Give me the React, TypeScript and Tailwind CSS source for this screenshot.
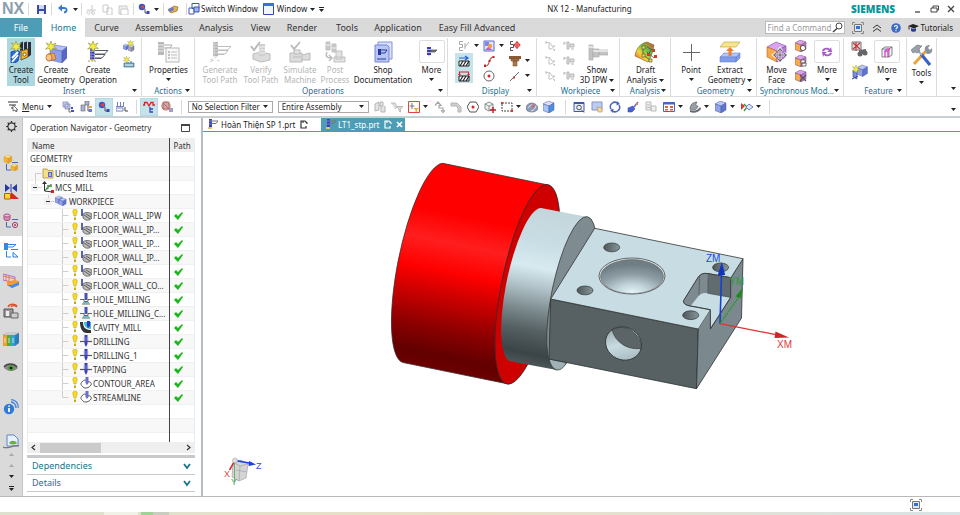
import React from "react";

type IconProps = { w?: number; h?: number; box?: string; className?: string; children: React.ReactNode };

function Icon({ w = 12, h = w, box, className = "", children }: IconProps) {
  return (
    <svg width={w} height={h} viewBox={box ?? `0 0 ${w} ${h}`} className={`shrink-0 ${className}`} fill="none" aria-hidden="true">
      {children}
    </svg>
  );
}

const Caret = ({ className = "" }: { className?: string }) => (
  <Icon w={5} h={3} className={className}>
    <path d="M0 0h5L2.500 3z" fill="#222" />
  </Icon>
);

/* ---------- shared glyph fragments ---------- */

const Star = ({ x, y, s = 1 }: { x: number; y: number; s?: number }) => (
  <g transform={`translate(${x} ${y}) scale(${s})`}>
    <path d="M0-5.500 1.300-1.800 5-3.500 2.600 0 5.500 2 1.800 1.800 0 5.500-1.500 1.800-5.500 2.600-2.400-.2-4.800-3.600-1.200-1.900z" fill="#f6ee3c" stroke="#8f8f3c" strokeWidth=".6" />
  </g>
);

const Cube = ({ x, y, s = 1, top = "#b9c8f8", front = "#8fa2ea", side = "#5f74cc", line = "#4a58a0" }: { x: number; y: number; s?: number; top?: string; front?: string; side?: string; line?: string }) => (
  <g transform={`translate(${x} ${y}) scale(${s})`} stroke={line} strokeWidth=".5">
    <path d="M0 3 5 0l6 2-5 3z" fill={top} />
    <path d="M0 3l6 2v7L0 9.500z" fill={front} />
    <path d="M6 5l5-3v7l-5 3z" fill={side} />
  </g>
);

const Mill = ({ x, y, s = 1, c = "#3a3fa8" }: { x: number; y: number; s?: number; c?: string }) => (
  <g transform={`translate(${x} ${y}) scale(${s})`}>
    <rect x="0" y="0" width="5" height="14" fill={c} />
    <path d="M0 2h5M0 5h5M0 8h5M0 11h5" stroke="#c3c6ee" strokeWidth=".8" />
    <path d="M1.200 0v14" stroke="#8d92dd" strokeWidth=".9" />
    <path d="M0 14h5l-2.500 3z" fill="#d8c84a" />
  </g>
);

const Steps = ({ x, y, s = 1, c = "#555b66" }: { x: number; y: number; s?: number; c?: string }) => (
  <g transform={`translate(${x} ${y}) scale(${s})`} stroke={c} strokeWidth="1">
    <path d="M0 .5h13L9.500 4H0M0 4.500h10L7 8H0M0 8.500h6" />
  </g>
);

/* ---------- ribbon icons (22 x 22) ---------- */

const Big = ({ children, dim }: { children: React.ReactNode; dim?: boolean }) => (
  <Icon w={22} h={22} className={dim ? "opacity-40 grayscale" : ""}>{children}</Icon>
);

const CreateToolIcon = () => (
  <Big>
    <path d="M10 2l3-1.500V9l-3 1zM14 1.500l3-1V8l-3 1zM18 1h3v13l-3 2z" fill="#2b2b3a" />
    <path d="M1 11l6-2 3 2-2 9-3 2H1z" fill="#2b6fd6" stroke="#173f8c" strokeWidth=".8" />
    <path d="M2 17l6-6M2 21l6-7" stroke="#fff" strokeWidth="1.800" />
    <path d="M11 10l7-2v8l-7 3z" fill="#f5b52e" stroke="#5c430a" strokeWidth=".8" />
    <circle cx="14.500" cy="13.500" r="1.600" fill="#fff" stroke="#5c430a" strokeWidth=".8" />
    <Star x={6} y={5.500} />
  </Big>
);
const CreateGeometryIcon = () => (
  <Big>
    <path d="M5 8l5-4 12 2-5 4z" fill="#b4c1f4" stroke="#5463b8" strokeWidth=".5" />
    <path d="M5 8l12 2v12L5 19z" fill="#8fa0ea" stroke="#5463b8" strokeWidth=".5" />
    <path d="M17 10l5-4v11l-5 5z" fill="#5568c4" stroke="#5463b8" strokeWidth=".5" />
    <path d="M3 13l6-1 2 6-7 2z" fill="#f7a55c" stroke="#a8591a" strokeWidth=".6" />
    <ellipse cx="4" cy="16.500" rx="3" ry="3.600" fill="#fbc48d" stroke="#a8591a" strokeWidth=".7" />
    <Star x={6} y={5.500} />
  </Big>
);
const CreateOperationIcon = () => (
  <Big>
    <Mill x={3} y={6} s={0.9} />
    <Steps x={8} y={9} />
    <path d="M1 20h2M7 20h2" stroke="#999" />
    <Star x={6} y={5.500} />
  </Big>
);
const PropertiesIcon = () => (
  <Big>
    <g opacity=".6">
      <rect x="0" y="1" width="6" height="13" fill="#8a8a8a" />
      <path d="M0 4h6M0 7h6M0 10h6" stroke="#ddd" />
      <path d="M6 4h8l-2 3H6" stroke="#777" />
      <rect x="8" y="7" width="13" height="14" fill="#f4f4f4" stroke="#8a8a8a" />
      <path d="M13 11h6M13 14h6M13 17h6" stroke="#999" />
      <path d="M10 10h2v2h-2zM10 13h2v2h-2zM10 16h2v2h-2z" fill="#999" />
    </g>
  </Big>
);
const GenerateIcon = () => (
  <Big dim>
    <Mill x={4} y={1} s={1} />
    <Steps x={9} y={5} />
    <path d="M1 19l3-1M1 21l4-2M11 20l-3-1" stroke="#888" />
  </Big>
);
const VerifyIcon = () => (
  <Big dim>
    <path d="M1 5l3 4 6-8" stroke="#555" strokeWidth="2" />
    <path d="M3 13l8-2 9 2v6l-9 2-8-3z" fill="#aaa" stroke="#555" />
    <path d="M9 3h6v12H9z" fill="#888" />
    <path d="M9 6h6M9 9h6M9 12h6" stroke="#ddd" />
  </Big>
);
const SimulateIcon = () => (
  <Big dim>
    <path d="M2 4l3 4 6-7" stroke="#555" strokeWidth="1.800" />
    <path d="M1 12h12v9H1zM13 14l8-2v7h-8" stroke="#555" fill="#aaa" />
    <path d="M5 9h6v4H5zM4 16h8" stroke="#555" fill="#bbb" />
  </Big>
);
const PostIcon = () => (
  <Big dim>
    <path d="M2 1h4v8H2zM8 3h4v8H8z" fill="#777" stroke="#666" />
    <path d="M2 4h4M8 7h4" stroke="#ddd" />
    <path d="M3 11c-2 4 0 6 4 6M5 14l3 3-3 3" stroke="#555" strokeWidth="1.400" />
    <path d="M12 10h6v8h-6zM10 16h11v5H10z" stroke="#666" fill="#bbb" />
  </Big>
);
const ShopDocIcon = () => (
  <Big>
    <path d="M6 1h14v17H6z" fill="#dbe3fb" stroke="#8394d8" />
    <path d="M3 4h12l2 2v15H3z" fill="#b7c6f6" stroke="#7486d2" />
    <path d="M6 8h3v6H6z" fill="#28389a" />
    <path d="M9 9h6l-2 3H9M5 18h9" stroke="#28389a" />
  </Big>
);
const Show3DIcon = () => (
  <Big>
    <path d="M3 4h4v15H3zM7 8h6v8H7zM13 9h9v5h-9z" fill="#c3c3c3" stroke="#b0b0b0" strokeWidth=".7" />
    <path d="M3 6h4M7 10h15" stroke="#efefef" strokeWidth="1.500" />
  </Big>
);
const DraftIcon = () => (
  <Icon w={24} h={22}>
    <defs>
      <linearGradient id="draft" x1="0" y1="1" x2="1" y2="0">
        <stop offset="0" stopColor="#e8362c" />
        <stop offset=".35" stopColor="#f3d33a" />
        <stop offset=".6" stopColor="#67c04a" />
        <stop offset="1" stopColor="#e8462c" />
      </linearGradient>
    </defs>
    <path d="M1 15C2 7 7 2 13 1l7 3c-1 5-2 11-6 17z" fill="url(#draft)" stroke="#8c5a2a" strokeWidth=".6" />
    <path d="M9 6v8l7 5M13 6l7 4M13 11l7 6M14 14l3-5" stroke="#444" strokeWidth=".7" />
    <path d="M8 5h3v3H8zM8 13h3v3H8zM15 18h3v3h-3z" fill="#f3e13a" stroke="#444" strokeWidth=".6" />
    <path d="M18 8h3v3h-3zM20 14h3v3h-3zM13 12h3v3h-3z" fill="#e0342a" />
  </Icon>
);
const PointIcon = () => (
  <Big>
    <path d="M11.500 3v17M3 11.500h17" stroke="#666" />
  </Big>
);
const ExtractIcon = () => (
  <Big>
    <path d="M5 1h16l-4 5H1z" fill="#f6e58a" stroke="#b99b3a" strokeWidth=".6" />
    <path d="M1 16l4-4h16l-4 4z" fill="#b3c6f7" stroke="#6b82cc" strokeWidth=".6" />
    <path d="M1 16h16v5H1zM17 16l4-4v5l-4 4z" fill="#7f9bea" stroke="#6b82cc" strokeWidth=".6" />
    <path d="M11 6l4 4h-2.500v5h-3v-5H7z" fill="#f08028" />
  </Big>
);
const MoveFaceIcon = () => (
  <Big>
    <path d="M1 6l9-5 10 4-9 5z" fill="#d9a3ee" stroke="#7a4a96" strokeWidth=".6" />
    <path d="M1 6l10 4v11L1 16z" fill="#f8a94e" stroke="#a8682a" strokeWidth=".6" />
    <path d="M11 10l9-5v11l-9 5z" fill="#b678d6" stroke="#7a4a96" strokeWidth=".6" />
    <path d="M14 8v12M8 14h12M12 10l2-2.500 2 2.500M12 18l2 2.500 2-2.500M10 12l-2.500 2 2.500 2M18 12l2.500 2-2.500 2" stroke="#fff" strokeWidth="2.600" />
    <path d="M14 8v12M8 14h12M12 10l2-2.500 2 2.500M12 18l2 2.500 2-2.500M10 12l-2.500 2 2.500 2M18 12l2.500 2-2.500 2" stroke="#444" strokeWidth=".9" />
  </Big>
);
const ToolsIcon = () => (
  <Big>
    <path d="M3 20L16 6" stroke="#e8a63a" strokeWidth="3" />
    <path d="M14 7c-1-4 1-6 5-6l-2 3 2 2 2-2c1 4-1 6-5 6z" fill="#8a949c" />
    <path d="M10 10l9 11" stroke="#3a62c4" strokeWidth="3.200" />
    <path d="M6 6l5 5" stroke="#aab2ba" strokeWidth="2" />
    <path d="M0 6l6-5 5 1-3 3 1 2-3 2-2-1-2 1z" fill="#9aa2a9" stroke="#59616a" strokeWidth=".5" />
  </Big>
);

const SmallMill = () => (
  <Icon w={14} h={12}>
    <path d="M2 1h4v8H2z" fill="#3a3fa8" />
    <path d="M2 3.500h4M2 6.500h4" stroke="#b9bdee" />
    <path d="M3 9h2l-1 2z" fill="#d8c84a" />
    <path d="M6 4h6l-2 2H6z" fill="#777" stroke="#555" strokeWidth=".8" />
  </Icon>
);
const Swirl = () => (
  <Icon w={12}>
    <path d="M1 5c1-4 6-4 8-2l1-2 1 5H6l2-1.500C6 3 4 3 3 5.500zM11 7c-1 4-6 4-8 2l-1 2-1-5h5L4 7.500C6 9 8 9 9 6.500z" fill="#a45bc4" />
  </Icon>
);
const PinkBox = () => (
  <Icon w={12}>
    <path d="M1 3l3-2h7v8l-3 2H1zM1 3h7v8M8 3l3-2" fill="#f5f5f5" stroke="#666" strokeWidth=".8" />
    <path d="M4 11V5h3v6" stroke="#d93ad0" strokeWidth="1.300" />
    <path d="M4 5l2-2h3L7 5" stroke="#d93ad0" />
  </Icon>
);

/* ---------- small icons (12 x 12) ---------- */

const small: Record<string, React.ReactNode> = {
  blocks: <><Cube x={0} y={4} s={0.5} /><Cube x={5} y={5} s={0.55} top="#ddd" front="#aab" side="#889" /><Star x={7.500} y={3.500} s={0.6} /></>,
  table: <><path d="M1 7h10v4H1z" fill="#7fb0c8" stroke="#3d6f86" strokeWidth=".7" /><path d="M2 9h8" stroke="#fff" strokeWidth=".8" /><path d="M8 5v2M5 6v1" stroke="#3d6f86" /><Star x={3.500} y={3.500} s={0.6} /></>,
  spring: <path d="M5 1.500H1.500v3h3v3h-3v3H5M7 7l4-5M7 3v6" stroke="#aaa" />,
  picture: <><path d="M1 1h10v10H1z" fill="#e4e8fc" stroke="#5a66d0" /><path d="M2 2h4v4H2z" fill="#7b88ea" /><circle cx="7" cy="6" r="2.200" fill="#f0a03c" /><path d="M2 10l3-3 5 3z" fill="#d25ab0" /></>,
  springRed: <><path d="M4 1.500H1.500v3h3v3h-3v3H4" stroke="#555" /><circle cx="8" cy="5" r="2.400" stroke="#d22" /><path d="M8 1v8M4.500 5h7" stroke="#d22" /></>,
  hatchTop: <><path d="M1 6h10v5H1z" fill="#fff" stroke="#222" /><path d="M2 11l3-5M5 11l3-5M8 11l3-5" stroke="#222" strokeWidth="1.200" /><path d="M1 3h8M7 1l3 2-3 2" stroke="#2463d6" strokeWidth="1.200" /></>,
  hatchRed: <><path d="M1 6h10v5H1z" fill="#fff" stroke="#222" /><path d="M2 11l3-5M5 11l3-5M8 11l3-5" stroke="#222" strokeWidth="1.200" /><path d="M1.500 6V2h9v4" stroke="#d22" strokeWidth="1.100" /><path d="M0 4h3L1.500 6zM9 4h3l-1.500 2z" fill="#d22" /></>,
  sCurve: <><path d="M2 11c6 1 2-9 9-9" stroke="#a55" strokeWidth="1.100" /><path d="M1 9.500h2V12H1zM9.500 1h2v2h-2zM5.500 5h2v2h-2z" fill="#c22" /></>,
  cutter: <><path d="M0 1h12v3H0z" fill="#8a5a34" /><path d="M2 4h8v2H2zM4 6h4v5H4z" fill="#b07a4a" stroke="#6b4426" strokeWidth=".5" /></>,
  target: <><circle cx="6" cy="6" r="5" stroke="#666" /><circle cx="6" cy="6" r="1.500" fill="#d22" /></>,
  line: <><path d="M1 11L10 2" stroke="#666" /><path d="M4 6.500h2v2H4z" fill="#c33" /></>,
  ghost: <><path d="M1 1v3M1 2.500h2M4 2v7h2l4-3H7l-2-3z" stroke="#bbb" strokeWidth=".9" /><path d="M8 9l2 1-1 1" stroke="#bbb" /></>,
  ghost2: <path d="M1 2v3M1 3h2M4 2v7h2V2zM7 4h4v3H7zM8 9h3" stroke="#b8b8b8" strokeWidth="1" fill="#ddd" />,
  syncA: <><Cube x={0} y={0} top="#d9a3ee" front="#f8a94e" side="#b678d6" line="#7a4a66" /><circle cx="8" cy="8" r="2.600" fill="#fff" stroke="#555" /></>,
  syncB: <><Cube x={0} y={0} top="#d9a3ee" front="#f8a94e" side="#b678d6" line="#7a4a66" /><path d="M6 5h4v3H6zM7 8h4v3H7z" fill="#fff" stroke="#555" strokeWidth=".8" /></>,
  syncC: <><Cube x={0} y={0} top="#d9a3ee" front="#f8a94e" side="#b678d6" line="#7a4a66" /><path d="M5 5l6 6M11 5l-6 6" stroke="#555" strokeWidth="1.100" /></>,
  nav1: <><path d="M1 1h5v5H1zM3 3h5v5H3z" fill="#ccd2f0" stroke="#7a80b0" strokeWidth=".7" /><path d="M7 7v4h2" stroke="#555" strokeWidth=".8" /><path d="M9 6h2v2H9zM9 9h3v2H9z" fill="#4450c0" /></>,
  nav2: <><path d="M5 0h4v4H5zM1 4h4v6H1z" fill="#a9afe2" stroke="#666" strokeWidth=".6" /><path d="M8 4v6h2" stroke="#555" /><path d="M9 5h3v2H9z" fill="#e8a24c" /><path d="M9 8h3v3H9z" fill="#6f78c8" /></>,
  nav3: <><circle cx="4" cy="4" r="3.200" fill="#3a56c8" /><path d="M2 4l4-2v4z" fill="#e0463a" /><path d="M7 6v4h2" stroke="#333" strokeWidth=".8" /><path d="M8.500 8h3v3h-3z" fill="#3544b8" /></>,
  nav4: <><path d="M0 5.500h8M1.500 1v4M4.500 1v4M7.500 1v4M0 7h7v3H0z" stroke="#7480c4" /><path d="M9 6v4h3" stroke="#444" /></>,
  path: <><path d="M0 4h1.500V1.500H4L6 5l2-3.500h2V4H12" stroke="#d22" strokeWidth="1.300" /><path d="M7 6v5h3M7 8h3" stroke="#3948b8" strokeWidth="1.300" /></>,
  noTool: <><path d="M2 1h6v7H2z" fill="#c9a9a9" stroke="#855" strokeWidth=".6" /><path d="M8 7h4v4H8z" fill="#9aa2c8" /><circle cx="5" cy="5" r="4" stroke="#cc7070" strokeWidth="1.200" /><path d="M2 2l6 6" stroke="#c66" /></>,
  grab: <path d="M1 3l4-2v8l-4 1zM6 1h3v4H6zM7 5v6h4V5" fill="#e4e4e4" stroke="#b4b4b4" />,
  funnel: <path d="M0 2h4l2 4-2 2M6 5.500h6L9.500 8v3L8 10V8z" stroke="#bbb" fill="#ddd" />,
  snap: <><path d="M.5.5h11v11H.5z" stroke="#d44" /><path d="M4 2v6M1.500 5h5" stroke="#777" /><path d="M5 7h6L9 9v2H7.500V9z" fill="#e5b53a" /></>,
  flip: <path d="M2 4.500L5 1l3 3.500H6V7h4v3M8 9l2 2.500L12 9" stroke="#a5a5a5" strokeWidth="1.200" />,
  arm: <path d="M1 2h6l4 4v5H8V7L6 5H1z" fill="#cfcfcf" stroke="#b4b4b4" />,
  hex: <><path d="M3 1h6l3 5-3 5H3L0 6z" stroke="#555" /><circle cx="6" cy="6" r="1.500" fill="#d22" /></>,
  cubeRed: <><path d="M1 3l4-2 4 2v5L5 10 1 8zM1 3l4 2 4-2M5 5v5" stroke="#777" strokeWidth=".8" fill="#eee" /><path d="M9 6v6M6 9h6" stroke="#b22" strokeWidth="1.500" /></>,
  marquee: <><path d="M1 2h10v8H1z" stroke="#444" strokeDasharray="2 1" /><path d="M0 1h2v2H0zM10 9h2v2h-2z" fill="#d33" /></>,
  sphere: <><path d="M0 7c0-3 3-5 6-5s6 3 6 5-3 4-6 4-6-1-6-4z" fill="#8d9ab8" stroke="#666" strokeWidth=".6" /><path d="M2 7c1-2 3-3 5-3M5 10c3 0 4-3 5-5" stroke="#e8ecf8" /><circle cx="7" cy="5" r="1.500" fill="#c66" /></>,
  cubeBlue: <Cube x={0} y={0} top="#e4dcf4" front="#a9c4f6" side="#4a8fe0" />,
  zoomFit: <><path d="M1 1.500h10v9H1z" fill="#e6eefc" stroke="#4458a8" /><path d="M1 2h10" stroke="#4458a8" strokeWidth="2" /><circle cx="6" cy="6.500" r="2.300" stroke="#555" /><path d="M8 8.500l3 3" stroke="#555" /></>,
  viewCard: <><path d="M1 1h10v8H1z" fill="#bccbf0" stroke="#8295c8" /><path d="M6 6l5 1v4H7z" fill="#f0d8a0" stroke="#b09050" strokeWidth=".6" /></>,
  rotate: <><path d="M2 8a4.500 4.500 0 0 1 7-5.500M10 4a4.500 4.500 0 0 1-7 5.500" stroke="#4a62c0" strokeWidth="1.500" /><path d="M8 0l3 3-3.500 1.500zM4 12L1 9l3.500-1.500z" fill="#4a62c0" /></>,
  brush: <><path d="M1 7l5-2 2 3-3 3H1z" fill="#4a62d8" stroke="#2e3f90" strokeWidth=".5" /><path d="M7 6l4-5" stroke="#6a70c0" strokeWidth="1.600" /><path d="M9 2h2v2H9z" fill="#e07a6a" /></>,
  sheets: <path d="M1 1h5v8H1zM6 5h5v5H6zM2 4h3M2 6.500h3" stroke="#bbb" fill="#eee" />,
  grid: <><path d="M.5 1.500h11v9H.5z" fill="#fff" stroke="#4467c8" /><path d="M0 2.500h12" stroke="#4467c8" strokeWidth="2" /><path d="M2 5h3v2H2zM7 5h3v2H7zM2 8h3v1.500H2zM7 8h3v1.500H7z" fill="#e0603a" /></>,
  dome: <><path d="M1 8c0-4 3-7 7-7-2 3-1 4 1 4-1 4-5 5-8 3z" fill="#9a9fa6" stroke="#5a5f66" strokeWidth=".7" /><path d="M1 9c4 2 8 0 10-3l1 2c-2 3-7 5-11 3z" fill="#666b72" /></>,
  cubeShade: <Cube x={0} y={0} />,
  rgb: <><path d="M0 2l4 3-4 4z" fill="#d33" /><path d="M3 3l3 3-3 4" stroke="#3a9a3a" strokeWidth="1.300" /><path d="M5 6l3-3 4 3-4 3z" fill="#dfe6f8" stroke="#6a84c8" /></>,
};

const Small = ({ n, className = "" }: { n: string; className?: string }) => <Icon w={12} className={className}>{small[n]}</Icon>;

/* ---------- title bar ---------- */

const Rule = ({ className = "" }: { className?: string }) => <span className={`w-px shrink-0 bg-[#d9d9d9] ${className}`} />;

function TitleBar() {
  return (
    <header className="flex h-[18px] items-center bg-white text-[8px]">
      <div className="flex flex-[5] items-center">
        <span className="w-[28px] pl-[2px] font-['Liberation_Sans'] text-[16px] leading-[18px] font-bold text-[#8ba0ac]">NX</span>
        <Rule className="h-3" />
        <button aria-label="Save" className="ml-[7px]"><Icon w={11}><path d="M1 1h9v9H1z" fill="#3a4aa8" /><path d="M3 1h5v4H3z" fill="#cfd6f6" /><path d="M3 7h5v3H3z" fill="#e8e8f0" /></Icon></button>
        <Rule className="ml-1 h-3" />
        <button aria-label="Undo" className="ml-[6px] flex items-center gap-[5px]"><Icon w={10}><path d="M2 4h4c4 0 3 4 0 4.500" stroke="#3478d8" strokeWidth="1.800" /><path d="M0 4l4-3.500v7z" fill="#3478d8" /></Icon><Caret /></button>
        <Rule className="ml-[3px] h-3" />
        <div className="ml-[4px] flex gap-[5px] opacity-30 grayscale">
          <button aria-label="Cut"><Icon w={11}><path d="M1 6h9M6 1v7" stroke="#555" /><circle cx="2.500" cy="8.500" r="1.500" stroke="#555" /><circle cx="7" cy="9" r="1.500" stroke="#555" /></Icon></button>
          <button aria-label="Copy"><Icon w={11}><path d="M1 1h5v7H1zM5 4h5v7H5z" fill="#fff" stroke="#555" /></Icon></button>
          <button aria-label="Paste"><Icon w={11}><path d="M1 2h8v8H1z" fill="#ccc" stroke="#555" /><path d="M3 5h7v6H3z" fill="#fff" stroke="#555" /></Icon></button>
        </div>
        <Rule className="ml-1 h-3" />
        <button aria-label="Assembly load" className="ml-[4px] flex items-center gap-1"><Small n="nav3" /><Caret /></button>
        <Rule className="ml-1 h-3" />
        <button aria-label="Touch mode" className="ml-[3px]"><Icon w={12}><path d="M1 7l6-4 4 1-1 4-6 2z" fill="#e9b04a" stroke="#7b5a1c" strokeWidth=".6" /><path d="M1 6l5-2 1 3-4 2z" fill="#6f78c8" /></Icon></button>
        <Rule className="ml-[7px] h-3" />
        <button className="ml-px flex items-center gap-px whitespace-nowrap text-[#222]">
          <Icon w={12}><path d="M4 .5h7v5H4zM1 5h5v6H1z" fill="#fff" stroke="#3a56c0" /><path d="M6 4h5v5H6z" fill="#9db2f0" stroke="#3a56c0" /></Icon>
          Switch Window
        </button>
        <button className="ml-[5px] flex items-center gap-[3px] text-[#222]">
          <Icon w={11} h={12}><path d="M.5.5h10v11H.5z" fill="#f2f5ff" stroke="#2e49b8" /><path d="M0 1.500h11" stroke="#3b6fe0" strokeWidth="3" /></Icon>
          Window <Caret />
        </button>
        <button aria-label="Customize" className="ml-1"><Icon w={5} h={5}><path d="M0 .5h5" stroke="#222" /><path d="M0 2h5L2.500 5z" fill="#222" /></Icon></button>
      </div>
      <h1 className="text-[8px] whitespace-nowrap text-[#222]">NX 12 - Manufacturing</h1>
      <div className="flex flex-[3] items-center justify-end">
        <span className="font-['Open_Sans'] text-[10px] leading-[18px] font-extrabold text-[#009999]">SIEMENS</span>
        <button aria-label="Minimize" className="ml-[19px]"><Icon w={7} h={8}><path d="M1 7h5" stroke="#444" strokeWidth="1.300" /></Icon></button>
        <button aria-label="Restore" className="ml-[9px]"><Icon w={9}><path d="M3 3V1h5.500v4H7M1 3h6v4H1z" stroke="#444" /></Icon></button>
        <button aria-label="Close" className="mr-[5px] ml-[8px]"><Icon w={8}><path d="M1 1l6 6M7 1L1 7" stroke="#444" strokeWidth="1.300" /></Icon></button>
      </div>
    </header>
  );
}

/* ---------- tab row ---------- */

const tabs = [
  ["File", "w-[42px] bg-[#4e9db6] text-white"],
  ["Home", "w-[43px] bg-white text-[#1b7390]"],
  ["Curve", "w-[43px]"],
  ["Assemblies", "w-[62px]"],
  ["Analysis", "w-[52px]"],
  ["View", "w-[37px]"],
  ["Render", "w-[46px]"],
  ["Tools", "w-[44px]"],
  ["Application", "w-[58px]"],
  ["Easy Fill Advanced", "w-[100px]"],
];

function TabRow() {
  return (
    <nav className="flex h-[19px] bg-[#dadada] text-[9px] text-[#333]">
      {tabs.map(([name, cls]) => (
        <button key={name} className={`shrink-0 whitespace-nowrap ${cls}`}>{name}</button>
      ))}
      <div className="ml-auto flex items-center pr-[7px] text-[8px]">
        <label className="flex h-[13px] w-20 items-center border border-[#bbb] bg-white">
          <input aria-label="Find a Command" placeholder="Find a Command" className="w-[66px] pl-[2px] text-[8px] outline-none placeholder:text-[#999]" />
          <Icon w={11}><circle cx="7" cy="4" r="3" stroke="#444" /><path d="M5 6.500L1 10" stroke="#444" strokeWidth="1.500" /></Icon>
        </label>
        <button aria-label="Full screen" className="ml-[7px]"><FullScreenIcon /></button>
        <button aria-label="Minimize ribbon" className="ml-2"><Icon w={10}><path d="M1 5l4-3 4 3M1 8.500l4-3 4 3" stroke="#333" /></Icon></button>
        <button aria-label="Help" className="ml-[9px]">
          <Icon w={10}><circle cx="5" cy="5" r="4.800" fill="#3a6cc8" /><path d="M3.500 4c0-2 3-2 3 0 0 1-1.500 1-1.500 2.200M5 7v1.200" stroke="#fff" strokeWidth="1.100" /></Icon>
        </button>
        <button className="ml-[7px] flex items-center gap-[2px] text-[#222]">
          <Icon w={11} h={9}><path d="M0 3l5-2 6 2-5 2.500z" fill="#222" /><path d="M3 5v3c1 1 4 1 5 0V5L6 6z" fill="#2b3f90" /><path d="M1 3.500v3" stroke="#222" /></Icon>
          Tutorials
        </button>
      </div>
    </nav>
  );
}

function FullScreenIcon() {
  return (
    <Icon w={12}>
      <path d="M.5 3V.5H3M9 .5h2.500V3M11.500 9v2.500H9M3 11.500H.5V9" stroke="#888" />
      <path d="M2.500 2.500h7v7h-7z" fill="#dfe8f5" stroke="#777" />
      <path d="M4 4h4v3H4z" fill="#2f72d8" />
    </Icon>
  );
}

/* ---------- ribbon ---------- */

type BigButtonProps = { icon: React.ReactNode; lines: string[]; arrow?: "below" | "inline"; width: string; dim?: boolean; active?: boolean; boxed?: boolean };

function BigButton({ icon, lines, arrow, width, dim, active, boxed }: BigButtonProps) {
  return (
    <button
      disabled={dim}
      className={`flex h-[48px] shrink-0 flex-col items-center pt-[2px] leading-[10px] whitespace-nowrap ${width} ${active ? "bg-[#aed8e0]" : ""} ${dim ? "text-[#b5b5b5]" : "text-[#222]"}`}
    >
      <span className={`mb-[2px] flex h-[23px] shrink-0 items-center justify-center ${boxed ? "w-[26px] rounded-xs border border-[#dedede]" : ""}`}>{icon}</span>
      {lines.map((line, i) => (
        <span key={line} className="flex items-center gap-[2px]">
          {line}
          {arrow === "inline" && i === lines.length - 1 && <Caret />}
        </span>
      ))}
      {arrow === "below" && <Caret className="mt-[3px]" />}
    </button>
  );
}

function Group({ label, width, children }: { label: string; width: string; children: React.ReactNode }) {
  return (
    <section aria-label={label} className={`flex shrink-0 flex-col border-r border-[#dcdcdc] ${width}`}>
      <div className="flex h-[48px]">{children}</div>
      <div className="flex h-[10px] items-center">
        <span className="w-[9px]" />
        <span className="flex-1 text-center whitespace-nowrap text-[#1b7390]">{label}</span>
        <button aria-label={`${label} options`} className="flex h-[7px] w-[9px] shrink-0 items-start pt-px"><Caret /></button>
      </div>
    </section>
  );
}

const SmallButton = ({ n, name, arrow, active }: { n: string; name: string; arrow?: boolean; active?: boolean }) => (
  <button aria-label={name} className="flex h-[15px] items-center gap-px">
    <span className={`flex h-[15px] items-center px-[3px] ${active ? "bg-[#c5e3ea]" : ""}`}><Small n={n} /></span>
    {arrow && <Caret />}
  </button>
);

function Ribbon() {
  return (
    <div className="flex h-[60px] overflow-hidden border-b border-[#dcdcdc] bg-white pt-[1px] text-[8px]">
      <Group label="Insert" width="w-[142px] pl-[7px]">
        <BigButton width="w-[28px]" icon={<CreateToolIcon />} lines={["Create", "Tool"]} active />
        <BigButton width="w-[42px]" icon={<CreateGeometryIcon />} lines={["Create", "Geometry"]} />
        <BigButton width="w-[42px]" icon={<CreateOperationIcon />} lines={["Create", "Operation"]} />
        <div className="ml-px flex flex-col gap-px">
          <SmallButton n="blocks" name="Create Method" />
          <SmallButton n="table" name="Create Program" />
        </div>
      </Group>
      <Group label="Actions" width="w-[53px]">
        <BigButton width="w-[53px]" icon={<PropertiesIcon />} lines={["Properties"]} arrow="below" />
      </Group>
      <Group label="Operations" width="w-[253px] pl-[4px]">
        <BigButton width="w-[42px]" icon={<GenerateIcon />} lines={["Generate", "Tool Path"]} dim />
        <BigButton width="w-[40px]" icon={<VerifyIcon />} lines={["Verify", "Tool Path"]} dim />
        <BigButton width="w-[38px]" icon={<SimulateIcon />} lines={["Simulate", "Machine"]} dim />
        <BigButton width="w-[32px]" icon={<PostIcon />} lines={["Post", "Process"]} dim />
        <BigButton width="w-[64px]" icon={<ShopDocIcon />} lines={["Shop", "Documentation"]} />
        <BigButton width="w-[33px]" icon={<SmallMill />} lines={["More"]} arrow="below" boxed />
      </Group>
      <Group label="Display" width="w-[89px] pl-[7px]">
        <div className="flex flex-col">
          <SmallButton n="spring" name="Tool display" arrow />
          <SmallButton n="hatchTop" name="Show tool path" active />
          <SmallButton n="hatchRed" name="Show boundary" active />
        </div>
        <div className="ml-px flex flex-col">
          <SmallButton n="picture" name="Shading" arrow />
          <SmallButton n="sCurve" name="Curve display" />
          <SmallButton n="target" name="Show point" />
        </div>
        <div className="ml-[2px] flex flex-col">
          <SmallButton n="springRed" name="Replay" />
          <SmallButton n="cutter" name="Cutter" arrow />
          <SmallButton n="line" name="Line" arrow />
        </div>
      </Group>
      <Group label="Workpiece" width="w-[83px] pl-[5px]">
        <div className="flex flex-col">
          <SmallButton n="ghost" name="Show 2D" />
          <SmallButton n="ghost" name="Show blank" />
          <SmallButton n="ghost" name="Show part" />
        </div>
        <div className="flex flex-col">
          <SmallButton n="ghost2" name="Save 2D" />
          <SmallButton n="ghost2" name="Save blank" />
          <SmallButton n="ghost2" name="Save part" />
        </div>
        <BigButton width="w-[38px]" icon={<Show3DIcon />} lines={["Show", "3D IPW"]} arrow="inline" />
      </Group>
      <Group label="Analysis" width="w-[51px]">
        <BigButton width="w-[51px]" icon={<DraftIcon />} lines={["Draft", "Analysis"]} arrow="inline" />
      </Group>
      <Group label="Geometry" width="w-[86px] pl-[4px]">
        <BigButton width="w-[32px]" icon={<PointIcon />} lines={["Point"]} arrow="below" />
        <BigButton width="w-[46px]" icon={<ExtractIcon />} lines={["Extract", "Geometry"]} arrow="inline" />
      </Group>
      <Group label="Synchronous Mod..." width="w-[87px]">
        <BigButton width="ml-[4px] w-[31px]" icon={<MoveFaceIcon />} lines={["Move", "Face"]} />
        <div className="flex flex-col">
          <SmallButton n="syncA" name="Pull face" />
          <SmallButton n="syncB" name="Offset region" />
          <SmallButton n="syncC" name="Delete face" />
        </div>
        <BigButton width="w-[34px]" icon={<Swirl />} lines={["More"]} arrow="below" boxed />
      </Group>
      <Group label="Feature" width="w-[63px] pl-[7px]">
        <div className="flex flex-col gap-[6px] pt-[3px]">
          <button aria-label="Edit feature">
            <Icon w={17}><path d="M1 1h9v8H1z" fill="#ddd" stroke="#777" /><path d="M2 2l7 6M9 2L2 8M5 1v9" stroke="#c33" strokeWidth="1.200" /><path d="M8 9l7-1v4l-7 2z" fill="#667" /><circle cx="9" cy="13" r="2.500" fill="#666" /><circle cx="14" cy="12" r="2.500" fill="#666" /></Icon>
          </button>
          <button aria-label="Create feature">
            <Icon w={17}><Cube x={6} y={1} s={0.95} /><path d="M2 7l4 2v6l-4-2z" fill="#7e8ee6" stroke="#34428c" strokeWidth=".6" /><path d="M1 15l6-3" stroke="#34428c" /><Star x={5} y={5} s={0.7} /></Icon>
          </button>
        </div>
        <BigButton width="w-[38px]" icon={<PinkBox />} lines={["More"]} arrow="below" boxed />
      </Group>
      <div className="flex w-[30px] shrink-0 flex-col border-r border-[#dcdcdc] pt-[3px]">
        <BigButton width="w-[29px]" icon={<ToolsIcon />} lines={["Tools"]} arrow="below" />
      </div>
      <div className="flex flex-1 items-end justify-end pr-[4px] pb-[6px]"><Caret /></div>
    </div>
  );
}

/* ---------- selection toolbar ---------- */

const Tool = ({ n, arrow, active }: { n: string; arrow?: boolean; active?: boolean }) => (
  <button aria-label={n} className={`flex h-4 shrink-0 items-center gap-[3px] px-[2px] ${active ? "bg-[#c5e3ea] outline outline-[#b5dae2]" : ""}`}>
    <Small n={n} />
    {arrow && <Caret />}
  </button>
);

function Picker({ label, value, width }: { label: string; value: string; width: string }) {
  return (
    <label className={`relative flex h-3 shrink-0 items-center border border-[#aaa] bg-white ${width}`}>
      <select aria-label={label} className="h-[10px] w-full appearance-none pl-[3px] leading-[10px] text-[#222] outline-none">
        <option>{value}</option>
      </select>
      <Icon w={5} h={3} className="pointer-events-none absolute right-[4px]"><path d="M0 0h5L2.500 3z" fill="#222" /></Icon>
    </label>
  );
}

function SelectionBar() {
  return (
    <div className="flex h-[21px] items-center border-b-2 border-[#c9d0d4] bg-white pr-[4px] text-[8px] text-[#222]">
      <button className="ml-[8px] flex items-center gap-[3px]">
        <Icon w={11}><path d="M0 1h10M1 4h7M3 7h4" stroke="#777" strokeWidth="1.300" /><path d="M5 4l5 5-2 0 1 2-1 0-1-2-2 1z" fill="#fff" stroke="#444" strokeWidth=".7" /></Icon>
        <span><u>M</u>enu</span><Caret />
      </button>
      <div className="ml-[8px] flex gap-[2px]">
        <Tool n="nav1" /><Tool n="nav2" /><Tool n="nav3" active /><Tool n="nav4" />
      </div>
      <Rule className="mr-[4px] ml-[6px] h-[14px]" />
      <div className="flex gap-[2px]"><Tool n="path" active /><Tool n="noTool" /></div>
      <Rule className="mx-[6px] h-[14px]" />
      <Picker label="Selection filter" value="No Selection Filter" width="w-[85px]" />
      <Picker label="Selection scope" value="Entire Assembly" width="ml-[5px] w-[91px]" />
      <div className="ml-[3px] flex gap-px">
        <Tool n="grab" /><Tool n="funnel" /><Tool n="snap" arrow /><Tool n="flip" /><Tool n="arm" /><Tool n="hex" /><Tool n="cubeRed" /><Tool n="marquee" arrow /><Tool n="sphere" /><Tool n="cubeBlue" />
      </div>
      <Rule className="mr-[5px] ml-[8px] h-[14px]" />
      <div className="flex gap-[2px]">
        <Tool n="zoomFit" /><Tool n="viewCard" /><Tool n="rotate" /><Tool n="brush" /><Tool n="sheets" /><Tool n="grid" arrow /><Tool n="dome" arrow /><Tool n="cubeShade" arrow /><Tool n="rgb" arrow />
      </div>
      <Rule className="ml-[6px] h-[14px]" />
      <Caret className="mt-[6px] ml-auto" />
    </div>
  );
}

/* ---------- resource bar ---------- */

const resourceIcons: { name: string; art: React.ReactNode; active?: boolean }[] = [
  { name: "Assembly Navigator", art: <><Cube x={1} y={0} s={0.7} top="#ffe08a" front="#f7b52e" side="#e8a020" line="#c88a18" /><path d="M9 7.500h6M3.500 9v6H8" stroke="#4467b8" /><Cube x={8} y={9} s={0.6} top="#ffe08a" front="#f7b52e" side="#e8a020" line="#c88a18" /></> },
  { name: "Constraint Navigator", art: <><path d="M2 0l5 4-5 4zM14 0L9 4l5 4z" fill="#2438a8" /><path d="M8 0v8" stroke="#2438a8" /><path d="M1.500 9.500h6v5.500h-6z" fill="#f7dc2e" stroke="#b85a18" /><path d="M8 15V8l8 7z" fill="#d8281e" /></> },
  { name: "Part Navigator", art: <><path d="M1 2v4c0 2 6 2 6 0V2" fill="#d88ab8" stroke="#a8507e" /><ellipse cx="4" cy="2.500" rx="3" ry="1.500" fill="#eebbd8" stroke="#a8507e" /><path d="M9 6.500h6M3.500 9v5H8" stroke="#4467b8" /><circle cx="12" cy="12" r="2.600" stroke="#a83a6e" /><circle cx="12" cy="12" r="1" fill="#a83a6e" /></> },
  { name: "Operation Navigator", active: true, art: <><path d="M1 0h4v7H1z" fill="#2f8ae0" /><path d="M5 1.500h8L10 4H5M8 6.500h7M3.500 8v6H8" stroke="#3a80d0" /><path d="M10 14V9.500l5 4.500z" stroke="#2f7ad0" /></> },
  { name: "Machine Tool Navigator", art: <><path d="M0 1l12 3v6L0 7z" stroke="#b06ad0" /><path d="M0 3l12 3M3 2v6M6 3v6" stroke="#e86a3a" strokeWidth=".8" /><path d="M4 9l7-2 5 1v4l-7 3-5-3z" fill="#f59a2e" /><path d="M4 12l5 3 7-3V9l-7 3" fill="#4a8ae0" /></> },
  { name: "Process Studio", art: <><path d="M1 6h9v8H1z" fill="#999" stroke="#555" /><path d="M3 8h3v5H3z" fill="#eee" /><path d="M5 4c2-4 7-3 9-1M8 4c1-2 4-2 6 0" stroke="#e0502a" strokeWidth="1.500" /><path d="M8 10h7v5H8z" fill="#ccc" stroke="#666" /></> },
  { name: "Reuse Library", art: <><path d="M0 3h4v11H0z" fill="#f79a2e" /><path d="M4 3h4v11H4z" fill="#4ab03a" /><path d="M8 3h4v11H8z" fill="#2fa0d8" /><path d="M0 3l4-2h12l-4 2z" fill="#ddd" stroke="#888" strokeWidth=".4" /><path d="M12 3l4-2v10l-4 3z" fill="#2c7cb8" /><path d="M2 6v5M6 6v5M10 6v5" stroke="#fff" strokeWidth=".7" /></> },
  { name: "Visual Reporting", art: <><path d="M1 8c3-5 10-5 14 0-4 4-10 4-14 0z" fill="#8a8a8a" /><circle cx="8" cy="8" r="3" fill="#5a9a3a" /><circle cx="8" cy="8" r="1.300" fill="#111" /><path d="M1 7c3-4 10-4 13 0" stroke="#444" strokeWidth="1.300" /></> },
  { name: "Web Browser", art: <><circle cx="6" cy="10" r="5.200" fill="#2f7ad8" /><path d="M6 9v4M6 6.500v1.300" stroke="#fff" strokeWidth="1.800" /><path d="M8 3c3 0 5 3 5 6M8 .7c5 0 7.300 4 7.300 8" stroke="#3f7fd8" strokeWidth="1.300" /></> },
  { name: "History", art: <><path d="M4 1h7l4 4v7H4z" fill="#eaf1fd" stroke="#5a84d0" /><path d="M6 9c2-3 6-3 8 0-2 2-6 2-8 0z" fill="#6ab04a" /><path d="M0 13c5 3 10-3 16-1" stroke="#777" strokeWidth="1.300" /></> },
];

const resourceSlots = ["h-[30px]", "h-[28px]", "h-[30px]", "h-[30px]", "h-[30px]", "h-[29px]", "h-[29px]", "h-[28px]", "h-[49px]", "h-[22px]"];

function ResourceBar() {
  return (
    <aside className="flex w-[23px] shrink-0 flex-col items-center border-r border-[#c4c4c4] bg-[#dadada] pt-[3px]">
      <button aria-label="Resource bar options" className="mb-[16px]">
        <Icon w={11}><circle cx="5.500" cy="5.500" r="3.600" stroke="#333" strokeWidth="1.200" /><path d="M5.500 0v2M5.500 9v2M0 5.500h2M9 5.500h2M1.700 1.700L3 3M8 8l1.400 1.400M9.400 1.600L8 3M3 8L1.700 9.400" stroke="#333" strokeWidth="1.200" /></Icon>
      </button>
      {resourceIcons.map((r, i) => (
        <button key={r.name} aria-label={r.name} className={`flex shrink-0 items-center justify-center ${resourceSlots[i]} ${r.active ? "w-full bg-white" : "w-[22px]"}`}>
          <Icon w={16}>{r.art}</Icon>
        </button>
      ))}
      <div className="flex flex-col items-center gap-[8px]">
        <Icon w={5} h={3}><path d="M0 3h5L2.500 0z" fill="#aaa" /></Icon>
        <Icon w={5} h={3}><path d="M0 3h5L2.500 0z" fill="#aaa" /></Icon>
        <Caret />
        <Icon w={5} h={5}><path d="M0 .5h5" stroke="#222" /><path d="M0 2h5L2.500 5z" fill="#222" /></Icon>
      </div>
    </aside>
  );
}

/* ---------- operation navigator ---------- */

const opIcons: Record<string, React.ReactNode> = {
  floor: <Icon w={12}><path d="M1 0h2v7H1z" fill="#5a60b8" /><path d="M3 5c2-2 6-2 9 0v4c-3 3-6 3-9 0z" fill="#bbb" stroke="#555" strokeWidth=".8" /><path d="M4 6l6 4M6 5l5 3" stroke="#555" strokeWidth=".9" /></Icon>,
  hole: <Icon w={12}><path d="M4.500 0h3v7h-3z" fill="#4a50b8" /><path d="M0 6.500h4v2h4v-2h4M2 11h8" stroke="#666" /><path d="M3 9h6v2H3z" fill="#6fb8c8" /></Icon>,
  cavity: <Icon w={12}><path d="M0 1h3c0 6 3 8 8 8v3H7C2 12 0 7 0 1z" fill="#333" /><path d="M4 1h7v7C6 8 4 5 4 1z" fill="#2fc0d8" /><path d="M7 0h3v5L8 7 7 5z" fill="#2f36b0" /></Icon>,
  drill: <Icon w={12}><path d="M0 6.500h12" stroke="#555" strokeWidth="1.200" /><path d="M4.500 0h3v9L6 12 4.500 9z" fill="#3a40b8" /><path d="M3.500 3h5M3.500 5h5" stroke="#8d94e4" strokeWidth=".8" /></Icon>,
  contour: <Icon w={12}><path d="M2 5c2-3 4-2 5 0 3-1 5 1 4 3-2 3-6 4-8 2S0 7 2 5z" fill="#fff" stroke="#555" /><path d="M5.500 0h3v6L7 8 5.500 6z" fill="#6a70c8" /></Icon>,
};

const ops: [string, string][] = [
  ["FLOOR_WALL_IPW", "floor"],
  ["FLOOR_WALL_IP...", "floor"],
  ["FLOOR_WALL_IP...", "floor"],
  ["FLOOR_WALL_IP...", "floor"],
  ["FLOOR_WALL", "floor"],
  ["FLOOR_WALL_CO...", "floor"],
  ["HOLE_MILLING", "hole"],
  ["HOLE_MILLING_C...", "hole"],
  ["CAVITY_MILL", "cavity"],
  ["DRILLING", "drill"],
  ["DRILLING_1", "drill"],
  ["TAPPING", "drill"],
  ["CONTOUR_AREA", "contour"],
  ["STREAMLINE", "contour"],
];

const Guide = ({ w, d, minus }: { w: number; d: string; minus?: number }) => (
  <Icon w={w} h={14}>
    <path d={d} stroke="#cfcfcf" />
    {minus !== undefined && (
      <>
        <path d={`M${minus - 3} 4h7v7h-7z`} fill="#f0f0f0" />
        <path d={`M${minus - 1} 7.500h4`} stroke="#333" />
      </>
    )}
  </Icon>
);

const Row = ({ shade, children, path }: { shade?: boolean; children?: React.ReactNode; path?: boolean }) => (
  <tr className={`h-[14px] border-b border-[#f0f0f0] ${shade ? "bg-[#f8f8f8]" : "bg-white"}`}>
    <td className="overflow-hidden border-r border-[#444] p-0"><div className="flex h-[13px] items-center whitespace-nowrap">{children}</div></td>
    <td className="p-0 pl-[4px]">
      {path && <Icon w={9}><path d="M0 5l2-2 2 2 4-4 1 1-5 7z" fill="#18b818" /></Icon>}
    </td>
  </tr>
);

function Navigator() {
  return (
    <section className="flex w-[178px] shrink-0 flex-col bg-white pr-[6px] pl-[4px] text-[8px] text-[#333]">
      <div className="flex h-5 shrink-0 items-center justify-between pr-[5px] pl-[3px]">
        <h2 className="text-[8px]">Operation Navigator - Geometry</h2>
        <button aria-label="Maximize"><Icon w={9} h={8}><path d="M.5.5h8v7h-8z" stroke="#444" /><path d="M0 1h9" stroke="#444" strokeWidth="2" /></Icon></button>
      </div>
      <div className="min-h-0 flex-1 overflow-hidden border-x border-[#ececec]">
        <table className="w-full table-fixed border-collapse leading-[13px]">
          <thead>
            <tr className="h-[14px] bg-[#efefef] text-left">
              <th className="w-[141px] border-r border-[#444] p-0 pl-[4px] font-normal">Name</th>
              <th className="p-0 pl-[4px] font-normal">Path</th>
            </tr>
          </thead>
          <tbody>
            <Row><span className="pl-[2px]">GEOMETRY</span></Row>
            <Row shade>
              <Guide w={14} d="M7.500 7v7M7.500 7.500h6" />
              <Icon w={12}><path d="M1 2h4l1 1.500h5V11H1z" fill="#f5e08a" stroke="#b0903a" strokeWidth=".8" /><path d="M6 5h4v5H6z" fill="#5a68c8" /><path d="M8 6v3" stroke="#fff" /></Icon>
              <span className="pl-[1px]">Unused Items</span>
            </Row>
            <Row>
              <Guide w={14} d="M7.500 0v7.500h6" minus={6} />
              <Icon w={12}><path d="M2.500 2v8l8 1M2.500 10l7-7" stroke="#333" /><path d="M0 3l2.500-3L5 3z" fill="#333" /><path d="M4 7.500h2.500M5 5h5" stroke="#2a9a2a" strokeWidth="1.500" /><path d="M9 9h3v3H9z" fill="#c22" /></Icon>
              <span className="pl-[1px]">MCS_MILL</span>
            </Row>
            <Row shade>
              <Guide w={27} d="M20.500 0v7.500h6" minus={19} />
              <Icon w={12}><Cube x={0} y={1} s={0.65} /><Cube x={4} y={3} s={0.65} /></Icon>
              <span className="pl-[2px]">WORKPIECE</span>
            </Row>
            {ops.map(([name, icon], i) => (
              <Row key={i} shade={i % 2 === 1} path>
                <Guide w={44} d={i === ops.length - 1 ? "M34.500 0v7.500h6" : "M34.500 0v14M34.500 7.500h6"} />
                <Icon w={6} h={12}><path d="M1 1c1-1 3-1 4 0 .6 2-.5 4-1 6H2C1.500 5 .4 3 1 1z" fill="#f5dc1e" stroke="#c8a81a" strokeWidth=".6" /><path d="M2 8.500h2v2.500H2z" fill="#c8a80e" /></Icon>
                <span className="pr-[1px] pl-[2px]">{opIcons[icon]}</span>
                {name}
              </Row>
            ))}
            <Row /><Row shade /><Row />
          </tbody>
        </table>
      </div>
      <div className="flex h-[11px] shrink-0 items-center bg-[#efefef] px-[4px]">
        <Icon w={5} h={7}><path d="M4 1L1 3.500 4 6" stroke="#333" strokeWidth="1.200" /></Icon>
        <span className="ml-[4px] h-[10px] w-[61px] bg-[#cbcbcb]" />
        <Icon w={5} h={7} className="ml-auto"><path d="M1 1l3 2.500L1 6" stroke="#333" strokeWidth="1.200" /></Icon>
      </div>
      <div className="mt-[2px] h-[3px] shrink-0 bg-[#c9c9c9]" />
      {["Dependencies", "Details"].map((t) => (
        <button key={t} className="flex h-[17px] shrink-0 items-center justify-between border-b border-[#c9c9c9] pr-[4px] pl-[5px] text-[9px] text-[#1b7390]">
          {t}
          <Icon w={8} h={7}><path d="M1 1l3 4 3-4" stroke="#1b7390" strokeWidth="1.800" /></Icon>
        </button>
      ))}
      <div className="h-[4px] shrink-0" />
    </section>
  );
}

/* ---------- graphics window ---------- */

const Hole = ({ x, y }: { x: number; y: number }) => <ellipse cx={x} cy={y} rx="8" ry="4.400" fill="url(#hole)" stroke="#333" strokeWidth=".7" />;

function Model() {
  return (
    <svg viewBox="203 132 757 364" className="min-h-0 w-full flex-1" fill="none" role="img" aria-label="Part model with machine coordinate system">
      <defs>
        <linearGradient id="red" gradientUnits="userSpaceOnUse" x1="446" y1="163" x2="405" y2="363">
          <stop offset="0" stopColor="#ff0000" />
          <stop offset=".24" stopColor="#ff0000" />
          <stop offset=".38" stopColor="#ff1e1e" />
          <stop offset=".52" stopColor="#ff0000" />
          <stop offset=".66" stopColor="#c40000" />
          <stop offset=".8" stopColor="#8c0000" />
          <stop offset=".93" stopColor="#620000" />
          <stop offset="1" stopColor="#6c0000" />
        </linearGradient>
        <linearGradient id="steel" gradientUnits="userSpaceOnUse" x1="541" y1="208" x2="511" y2="361">
          <stop offset="0" stopColor="#c3d6dc" />
          <stop offset=".2" stopColor="#c8dde3" />
          <stop offset=".38" stopColor="#d6eaf0" />
          <stop offset=".5" stopColor="#b3c5cb" />
          <stop offset=".66" stopColor="#7a888c" />
          <stop offset=".78" stopColor="#566163" />
          <stop offset=".93" stopColor="#3b4446" />
          <stop offset="1" stopColor="#4c5658" />
        </linearGradient>
        <linearGradient id="hole" x1="0" y1="0" x2="1" y2="0">
          <stop offset="0" stopColor="#4d5759" />
          <stop offset="1" stopColor="#87979c" />
        </linearGradient>
        <radialGradient id="bowl" cx=".5" cy="1" r=".85" fx=".5" fy=".98">
          <stop offset="0" stopColor="#e6f4f8" />
          <stop offset=".3" stopColor="#c3d5db" />
          <stop offset=".65" stopColor="#8f9ea5" />
          <stop offset="1" stopColor="#6f7d84" />
        </radialGradient>
        <linearGradient id="bore" x1="0" y1="0" x2="1" y2="1">
          <stop offset="0" stopColor="#8b9a9f" />
          <stop offset=".5" stopColor="#c8dbe1" />
          <stop offset="1" stopColor="#9db0b6" />
        </linearGradient>
      </defs>

      <g stroke="#3a2a2a" strokeWidth=".8">
        <path d="M442.700 163.300A25.700 101.700 11.660 0 0 403.300 362.600L508.300 384A25.700 101.700 11.660 0 0 546.700 184.700Z" fill="url(#red)" />
        <ellipse cx="527.500" cy="284.300" rx="25.700" ry="101.700" transform="rotate(11.660 527.500 284.300)" fill="#cf0000" />
      </g>

      <path d="M541 208A19.800 78.200 11.660 0 0 511.400 361.400L556.900 370A19.800 78.200 11.660 0 0 586.500 216.700Z" fill="url(#steel)" />
      <ellipse cx="571.700" cy="293.300" rx="19.800" ry="78.200" transform="rotate(11.660 571.700 293.300)" fill="#7e8c91" stroke="#333" strokeWidth=".7" />
      <path d="M549 359c2 7 5 11 9 11 4-.5 6-3 8.500-7.500z" fill="#9fb0b6" stroke="#333" strokeWidth=".6" />

      <path d="M549 359l147.500 29.700 1.800-59.700-147.600-30z" fill="#576062" stroke="#2d3233" strokeWidth=".8" strokeLinejoin="round" />
      <path d="M698.300 329l44.700-70.300-1.500 59.300-45 70.700z" fill="#7b898e" stroke="#2d3233" strokeWidth=".8" strokeLinejoin="round" />
      <path d="M594.700 228.300L743 258.700 698.300 329 550.700 299z" fill="#c8dde3" stroke="#333" strokeWidth=".8" strokeLinejoin="round" />

      <path d="M710.300 309.700l-22.300-4.200q-6-2-4-5.500l14-22.500q3-5 10-4l22.700 4.200-.1 20-20.300 31.300z" fill="#c8dde3" stroke="#333" strokeWidth=".7" strokeLinejoin="round" />
      <path d="M708.300 273.600l22.400 4.100-.1 19.700-22.900-4.100z" fill="#616c70" />
      <path d="M698 277.500q3-5 10.300-3.900l-.6 19.700q-7-1-9.700 3.500l-7.500 9.200-3-.6q-5.500-2-3.500-5.400z" fill="#7d8b90" />
      <path d="M699.500 276l-.5 19.500M708.300 273.600l-.6 19.700 22.900 4.100" stroke="#3c4547" strokeWidth=".6" />
      <path d="M710.300 309.700l-22.300-4.200q-6-2-4-5.500l14-22.500q3-5 10-4l22.700 4.200" stroke="#333" strokeWidth=".8" />
      <path d="M698.300 329l12-19.300v19.400z" fill="#7b898e" />
      <path d="M710.300 309.700v19.400l20.300-31.700v-19.700" stroke="#333" strokeWidth=".7" />

      <Hole x={611.700} y={247.400} />
      <Hole x={585} y={290.400} />
      <Hole x={690.700} y={315.200} />
      <Hole x={720.600} y={267.400} />
      <ellipse cx="632" cy="276" rx="33" ry="18" fill="#dcebef" stroke="#444" strokeWidth=".8" />
      <ellipse cx="632" cy="276.600" rx="31.500" ry="17" fill="url(#bowl)" stroke="#555" strokeWidth=".5" />

      <ellipse cx="623.500" cy="343.500" rx="18.300" ry="16.300" transform="rotate(25 623.500 343.500)" fill="url(#bore)" stroke="#2d3233" strokeWidth=".8" />
      <path d="M612 330c4 13 15 20 29.300 18.500 1.500-9-8-20-18.300-21-4-.5-8 .5-11 2.500z" fill="#5b6567" stroke="#333" strokeWidth=".6" />

      <path d="M720 323.700L721.500 274" stroke="#1440d0" strokeWidth="1.600" />
      <path d="M717.800 275l4-13 3.400 13z" fill="#0f35c0" />
      <path d="M720 323.700l19-27" stroke="#1fa01f" strokeWidth="1.300" strokeDasharray="2 .8" />
      <path d="M735.500 296.500l7.500-9-2.500 10.500z" fill="#1a8a1a" />
      <path d="M720 323.700l56 11" stroke="#e03030" strokeWidth="1.300" />
      <path d="M775.500 331.500l13.500 6-14.500.5z" fill="#c82828" />
      <g className="font-['Liberation_Sans'] text-[10px]">
        <text x="706" y="262" fill="#1c4ae0">ZM</text>
        <text x="729" y="285" fill="#2f9a3a">YM</text>
        <text x="777" y="348" fill="#e03a3a">XM</text>
      </g>

      <path d="M233 462l8-2 7 4-2 14-7 3-7-4z" fill="#d4d4d4" stroke="#a5a5a5" strokeWidth=".7" />
      <path d="M233 462l7 4-1 15M240 466l8-2M236 470l11 2" stroke="#a5a5a5" strokeWidth=".7" />
      <path d="M235 460.500l17 3" stroke="#1440e0" strokeWidth="1.500" />
      <path d="M249 461l7 3.500-7.500 1.500z" fill="#1440e0" />
      <path d="M235 460.500l-5.500 9.500" stroke="#d03030" strokeWidth="1.500" />
      <path d="M234.500 462v19" stroke="#6ab06a" strokeWidth="1" />
      <circle cx="235" cy="460.500" r="2.500" fill="#ddd" stroke="#999" strokeWidth=".5" />
      <g className="font-['Liberation_Sans'] text-[9px]">
        <text x="256" y="469" fill="#2a50e0">Z</text>
        <text x="224" y="477" fill="#d84a4a">X</text>
        <text x="231" y="485" fill="#4aa04a">Y</text>
      </g>
    </svg>
  );
}

const SheetIcon = ({ c }: { c: string }) => (
  <Icon w={8} h={9}><path d="M5 1H1v7h5V6M5 1l2 2v1M3 3v-2" stroke={c} strokeWidth="1.200" /></Icon>
);
const PartIcon = () => (
  <Icon w={11} h={11}><path d="M2 0h3v8H2z" fill="#3a40b8" /><path d="M2 2h3M2 5h3" stroke="#9ba0ea" strokeWidth=".7" /><path d="M5 2h6L9 4.500H5" stroke="#777" /><path d="M1 8h4v2H1z" fill="#d8c86a" /></Icon>
);

function GraphicsWindow() {
  return (
    <main className="flex min-w-0 flex-1 flex-col border-l-2 border-[#b4bdc2] bg-white">
      <div className="flex h-[14px] shrink-0 border-b border-[#4a9cb5] text-[8px]">
        <button className="flex w-[118px] items-center pl-[4px] text-[#222]">
          <PartIcon />
          <span className="mr-[5px] ml-[3px]">Hoàn Thiện SP 1.prt</span>
          <SheetIcon c="#333" />
        </button>
        <button className="flex w-[84px] items-center bg-[#4e9db6] pl-[4px] text-white">
          <PartIcon />
          <span className="mr-[4px] ml-[2px]">LT1_stp.prt</span>
          <SheetIcon c="#fff" />
          <Icon w={7} className="ml-[4px]"><path d="M1 1l5 5M6 1L1 6" stroke="#fff" strokeWidth="1.700" /></Icon>
        </button>
      </div>
      <Model />
    </main>
  );
}

export default function App() {
  return (
    <div className="flex h-screen flex-col overflow-hidden bg-white font-['Noto_Sans',sans-serif]">
      <TitleBar />
      <TabRow />
      <Ribbon />
      <SelectionBar />
      <div className="flex min-h-0 flex-1">
        <ResourceBar />
        <Navigator />
        <GraphicsWindow />
      </div>
      <footer className="shrink-0">
        <div className="flex h-[16px] items-center justify-end border-t border-[#b9b9b9] pr-[38px]"><button aria-label="Full screen"><FullScreenIcon /></button></div>
        <div className="flex h-[3px] bg-linear-to-r from-[#dde1cd] via-[#eae0c6] to-[#d8e4e6]">
          <span className="ml-[104px] w-[34px] bg-[#f0f2e8]" />
          <span className="ml-[3px] w-[12px] bg-[#9fd396]" />
          <span className="w-[16px] bg-[#c9cdc0]" />
        </div>
      </footer>
    </div>
  );
}
